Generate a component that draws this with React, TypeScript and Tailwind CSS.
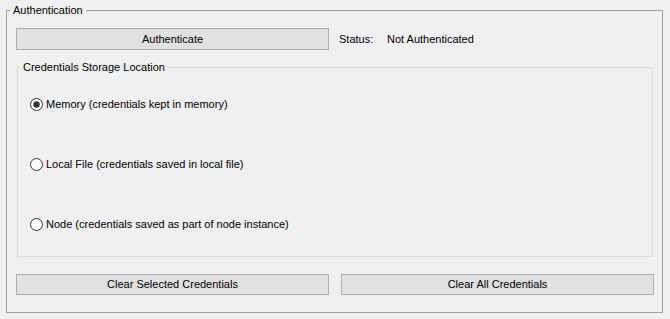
import { useState } from "react";

// storage options shown in the inner group
const storageOptions = [
  { id: "memory", label: "Memory (credentials kept in memory)" },
  { id: "file", label: "Local File (credentials saved in local file)" },
  { id: "node", label: "Node (credentials saved as part of node instance)" },
];

const Radio = ({ checked }: { checked: boolean }) => (
  <svg width="13" height="13" viewBox="0 0 13 13" className="shrink-0">
    <circle cx="6.5" cy="6.5" r="6" fill="#ffffff" stroke="#333333" strokeWidth="1" />
    {checked && <circle cx="6.5" cy="6.5" r="3.2" fill="#333333" />}
  </svg>
);

const Button = ({ label, className }: { label: string; className?: string }) => (
  <button
    className={
      "flex items-center justify-center bg-[#e1e1e1] border border-[#adadad] text-[11px] text-black " +
      (className ?? "")
    }
  >
    {label}
  </button>
);

export default function App() {
  const [selected, setSelected] = useState("memory");

  return (
    <div
      className="w-[670px] h-[319px] bg-[#f0eff1] pt-[4px] pl-[6px] pr-[7px] text-[11px] text-black"
      style={{ fontFamily: '"Liberation Sans", Arial, sans-serif' }}
    >
      <fieldset className="h-[309px] border border-[#a0a0a0]">
        <legend className="ml-[3px] px-[3px] leading-[13px]">Authentication</legend>

        <div className="pl-[9px] pr-[8px] pt-[11px]">
          <div className="flex items-center">
            <Button label="Authenticate" className="w-[313px] h-[22px]" />
            <span className="ml-[10px] w-[48px]">Status:</span>
            <span>Not Authenticated</span>
          </div>

          <fieldset className="mx-[1px] mt-[11px] h-[196px] border border-[#dcdcdc]">
            <legend className="ml-[2px] px-[3px] leading-[13px]">Credentials Storage Location</legend>
            <div className="flex flex-col gap-[46px] pl-[12px] pt-[23px]">
              {storageOptions.map((opt) => (
                <label
                  key={opt.id}
                  className="flex items-center gap-[3px] h-[14px] cursor-default"
                  onClick={() => setSelected(opt.id)}
                >
                  <Radio checked={selected === opt.id} />
                  <span>{opt.label}</span>
                </label>
              ))}
            </div>
          </fieldset>

          <div className="grid grid-cols-2 gap-[12px] mt-[17px]">
            <Button label="Clear Selected Credentials" className="h-[21px]" />
            <Button label="Clear All Credentials" className="h-[21px]" />
          </div>
        </div>
      </fieldset>
    </div>
  );
}
